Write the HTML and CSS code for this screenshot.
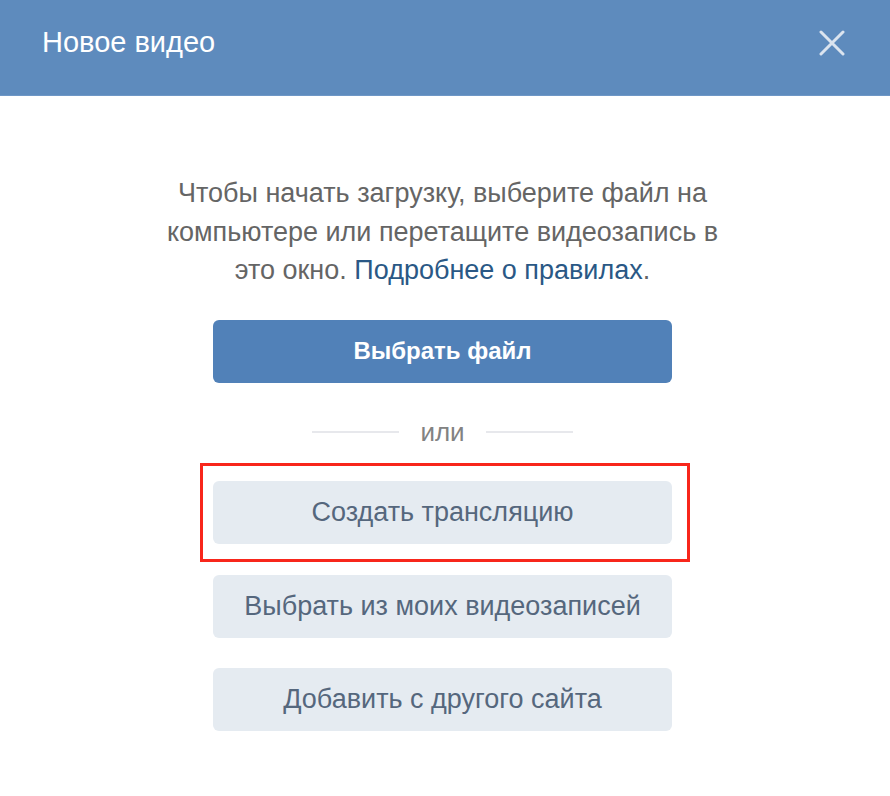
FILE: index.html
```html
<!DOCTYPE html>
<html lang="ru">
<head>
  <meta charset="UTF-8" />
  <title>Новое видео</title>
  <link rel="stylesheet" href="styles.css">
</head>
<body>
  <div class="box-header">
    <h2>Новое видео</h2>
    <button class="close" aria-label="Закрыть">
      <svg width="26" height="26" viewBox="0 0 26 26">
        <path d="M2 2 L24 24 M24 2 L2 24" stroke="#dbe4ef" stroke-width="3" stroke-linecap="round"/>
      </svg>
    </button>
  </div>

  <div class="box-body">
    <p class="info">
      Чтобы начать загрузку, выберите файл на<br>
      компьютере или перетащите видеозапись в<br>
      это окно. <a href="#">Подробнее о правилах</a>.
    </p>

    <button class="btn btn-primary">Выбрать файл</button>

    <div class="divider"><span>или</span></div>

    <div class="highlight">
      <button class="btn btn-secondary">Создать трансляцию</button>
    </div>
    <button class="btn btn-secondary">Выбрать из моих видеозаписей</button>
    <button class="btn btn-secondary">Добавить с другого сайта</button>
  </div>
</body>
</html>
```

FILE: styles.css
```css
* {
  box-sizing: border-box;
  margin: 0;
  padding: 0;
}

body {
  font-family: "Liberation Sans", Arial, sans-serif;
  background: #fff;
  width: 890px;
}

/* Header */
.box-header {
  display: flex;
  justify-content: space-between;
  align-items: center;
  height: 96px;
  padding: 0 38px 10px 42px;
  background-color: #5e8bbd;
  border-bottom: 1px solid #6e97c6;
}

.box-header h2 {
  color: #fff;
  font-size: 29px;
  font-weight: 400;
}

.close {
  background: none;
  border: none;
  width: 40px;
  height: 40px;
  display: flex;
  align-items: center;
  justify-content: center;
  cursor: pointer;
}

/* Body */
.box-body {
  width: 459px;
  margin-left: 213px;
  padding-top: 78px;
  display: flex;
  flex-direction: column;
  align-items: center;
}

.info {
  width: 640px;
  flex-shrink: 0;
  text-align: center;
  font-size: 27px;
  line-height: 38.5px;
  color: #656565;
  margin-bottom: 30px;
}

.info a {
  color: #2a5885;
  text-decoration: none;
}

.btn {
  width: 459px;
  height: 63px;
  border: none;
  border-radius: 6px;
  font-family: inherit;
  font-size: 27px;
  cursor: pointer;
  flex-shrink: 0;
}

.btn-primary {
  background-color: #5181b8;
  color: #fff;
  font-weight: 700;
  font-size: 24px;
}

.btn-secondary {
  background-color: #e5ebf1;
  color: #55677d;
  margin-bottom: 30px;
}

.divider {
  display: flex;
  align-items: center;
  gap: 21px;
  height: 31px;
  margin: 34px 0 15px;
  color: #828282;
  font-size: 26px;
}

.divider::before,
.divider::after {
  content: "";
  width: 87px;
  height: 2px;
  background-color: #e7e8ec;
}

.highlight {
  align-self: flex-start;
  margin-left: -13px;
  border: 3px solid #f8261b;
  padding: 15px 15px 15px 10px;
  margin-bottom: 13px;
}

.highlight .btn {
  margin-bottom: 0;
}
```
